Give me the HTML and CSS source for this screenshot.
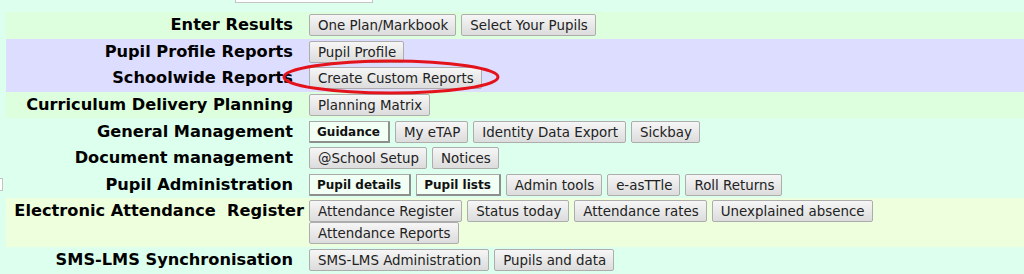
FILE: index.html
```html
<!DOCTYPE html>
<html lang="en">
<head>
<meta charset="utf-8">
<title>Menu</title>
<link rel="stylesheet" href="styles.css">
</head>
<body>
<div class="page">
  <div class="topbar"><div class="topfield"></div></div>
  <div class="menu">
    <div class="row green">
      <div class="label">Enter Results</div>
      <div class="btns"><button class="btn">One Plan/Markbook</button><button class="btn">Select Your Pupils</button></div>
    </div>
    <div class="row lav">
      <div class="label">Pupil Profile Reports</div>
      <div class="btns"><button class="btn">Pupil Profile</button></div>
    </div>
    <div class="row lav">
      <div class="label">Schoolwide Reports</div>
      <div class="btns"><button class="btn">Create Custom Reports</button></div>
    </div>
    <div class="row green">
      <div class="label">Curriculum Delivery Planning</div>
      <div class="btns"><button class="btn">Planning Matrix</button></div>
    </div>
    <div class="row mint">
      <div class="label">General Management</div>
      <div class="btns"><button class="btn strong">Guidance</button><button class="btn">My eTAP</button><button class="btn">Identity Data Export</button><button class="btn">Sickbay</button></div>
    </div>
    <div class="row mint">
      <div class="label">Document management</div>
      <div class="btns"><button class="btn">@School Setup</button><button class="btn">Notices</button></div>
    </div>
    <div class="row mint">
      <div class="label">Pupil Administration</div>
      <div class="btns"><button class="btn strong">Pupil details</button><button class="btn strong">Pupil lists</button><button class="btn">Admin tools</button><button class="btn">e-asTTle</button><button class="btn">Roll Returns</button></div>
    </div>
    <div class="row yellow">
      <div class="label wide">Electronic Attendance  Register</div>
      <div class="btns"><button class="btn">Attendance Register</button><button class="btn">Status today</button><button class="btn">Attendance rates</button><button class="btn">Unexplained absence</button><span class="break"></span><button class="btn">Attendance Reports</button></div>
    </div>
    <div class="row mint">
      <div class="label">SMS-LMS Synchronisation</div>
      <div class="btns"><button class="btn">SMS-LMS Administration</button><button class="btn">Pupils and data</button></div>
    </div>
  </div>
  <div class="edgefield"></div>
  <svg class="highlight" width="224" height="40" viewBox="0 0 224 40" aria-hidden="true">
    <ellipse cx="112" cy="20" rx="107" ry="16" fill="none" stroke="#e3121b" stroke-width="3"/>
  </svg>
</div>
</body>
</html>
```

FILE: styles.css
```css
html, body {
  margin: 0;
  padding: 0;
}

body {
  background: #ddffee;
  font-family: "DejaVu Sans", Verdana, sans-serif;
  color: #000;
}

.page {
  position: relative;
  width: 1024px;
  height: 274px;
  overflow: hidden;
}

.topbar {
  height: 12px;
}

.topfield {
  margin-left: 235px;
  width: 138px;
  height: 3px;
  box-sizing: border-box;
  background: #fff;
  border: 1px solid #c4c4c4;
  border-top: 0;
}

.menu {
  margin-left: 6px;
}

.row {
  display: grid;
  grid-template-columns: 303px 1fr;
  align-items: start;
  padding: 2.3px 0;
}

.green { background: #ddffdd; }
.lav { background: #ddddff; }
.mint { background: #ddffee; }
.yellow { background: #eeffdd; }

.label {
  font-weight: bold;
  font-size: 16.2px;
  line-height: 22px;
  text-align: right;
  padding-right: 16px;
  white-space: pre;
  color: #000;
}

.label.wide {
  padding-right: 5px;
}

.btns {
  display: flex;
  flex-wrap: wrap;
  column-gap: 5px;
  row-gap: 0;
}

.btn {
  -webkit-appearance: none;
  appearance: none;
  margin: 0;
  height: 22px;
  box-sizing: border-box;
  padding: 1px 7px 0 8px;
  font-family: "DejaVu Sans", Verdana, sans-serif;
  font-size: 13.4px;
  line-height: 19px;
  color: #222;
  background: linear-gradient(#f6f6f6, #dcdcdc);
  border: 1px solid #adadad;
  border-radius: 2px;
  white-space: nowrap;
}

.btn.strong {
  font-weight: bold;
  font-size: 12px;
  color: #111;
  background: #f2fff4;
  border-width: 1px 2px 2px 1px;
  border-style: solid;
  border-color: #a8a8a8 #8e8e8e #8e8e8e #a8a8a8;
  border-radius: 1px;
  padding: 1px 8px 0 7px;
}

.break {
  flex-basis: 100%;
  height: 0;
}

.edgefield {
  position: absolute;
  left: 0;
  top: 178px;
  width: 3px;
  height: 13px;
  box-sizing: border-box;
  background: #fff;
  border: 1px solid #c4c4c4;
  border-left: 0;
}

.highlight {
  position: absolute;
  left: 279px;
  top: 57px;
}
```
